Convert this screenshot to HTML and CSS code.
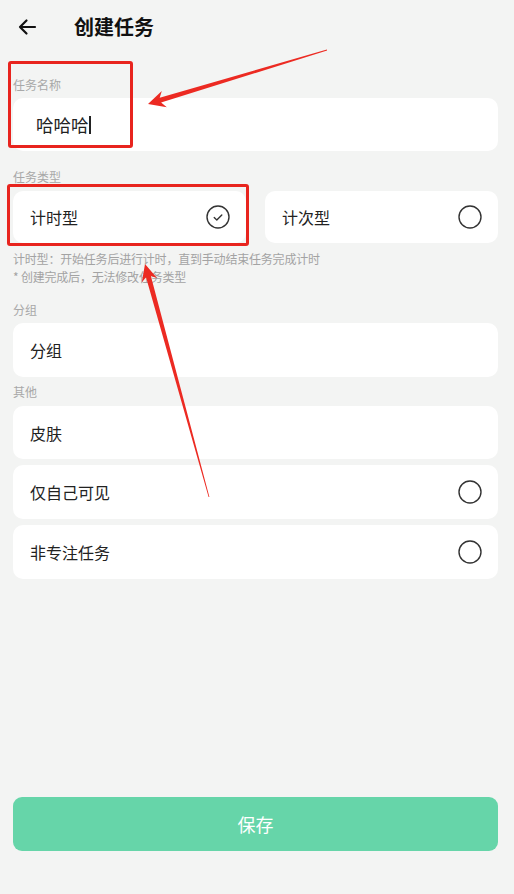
FILE: index.html
```html
<!DOCTYPE html>
<html lang="zh-CN">
<head>
<meta charset="utf-8">
<title>创建任务</title>
<link rel="stylesheet" href="styles.css">
</head>
<body>
<div class="page">
  <header class="header">
    <svg class="back" viewBox="0 0 20 20" width="20" height="20"><path d="M18 10H3M9.5 3.5L3 10l6.5 6.5" fill="none" stroke="#111" stroke-width="2.2" stroke-linecap="round" stroke-linejoin="round"/></svg>
    <h1 class="title">创建任务</h1>
  </header>

  <div class="label l1">任务名称</div>
  <div class="card input-card"><span class="input-text">哈哈哈</span><span class="cursor"></span></div>

  <div class="label l2">任务类型</div>
  <div class="type-row">
    <div class="card type-card">
      <span class="text">计时型</span>
      <svg class="radio" viewBox="0 0 24 24" width="24" height="24"><circle cx="12" cy="12" r="11" fill="none" stroke="#333" stroke-width="1.4"/><path d="M8.2 12.6l2.6 2.3 5-5" fill="none" stroke="#333" stroke-width="1.4" stroke-linecap="round" stroke-linejoin="round"/></svg>
    </div>
    <div class="card type-card">
      <span class="text">计次型</span>
      <svg class="radio" viewBox="0 0 24 24" width="24" height="24"><circle cx="12" cy="12" r="11" fill="none" stroke="#333" stroke-width="1.4"/></svg>
    </div>
  </div>
  <div class="hint">计时型：开始任务后进行计时，直到手动结束任务完成计时<br>* 创建完成后，无法修改任务类型</div>

  <div class="label l3">分组</div>
  <div class="card row h54"><span class="text">分组</span></div>

  <div class="label l4">其他</div>
  <div class="list">
    <div class="card row h53"><span class="text">皮肤</span></div>
    <div class="card row h54">
      <span class="text">仅自己可见</span>
      <svg class="radio" viewBox="0 0 24 24" width="24" height="24"><circle cx="12" cy="12" r="11" fill="none" stroke="#333" stroke-width="1.4"/></svg>
    </div>
    <div class="card row h54">
      <span class="text">非专注任务</span>
      <svg class="radio" viewBox="0 0 24 24" width="24" height="24"><circle cx="12" cy="12" r="11" fill="none" stroke="#333" stroke-width="1.4"/></svg>
    </div>
  </div>

  <button class="save">保存</button>
</div>

<div class="mark mark1"></div>
<div class="mark mark2"></div>
<svg class="arrows" viewBox="0 0 514 894" width="514" height="894">
  <polygon fill="#ec2a22" points="326.9,49.6 159.7,97.8 161.8,91 148,104 166.8,107.2 161.1,102.6 327.1,50.4"/>
  <polygon fill="#ec2a22" points="208.6,497.1 146,277.2 141.8,282.5 145,264 157.2,278.3 150.8,275.8 209.4,496.9"/>
</svg>
</body>
</html>
```

FILE: styles.css
```css
* { box-sizing: border-box; }
html, body { margin: 0; padding: 0; }
body {
  background: #f3f4f3;
  font-family: "Noto Sans CJK SC", "Noto Sans", sans-serif;
  color: #222;
  position: relative;
  width: 514px;
  min-height: 894px;
  overflow: hidden;
}
.page {
  display: flex;
  flex-direction: column;
  min-height: 894px;
  padding: 0 16px 43px 13px;
}
.header {
  height: 54px;
  display: flex;
  align-items: center;
  padding-left: 4px;
}
.back { flex: none; }
.title {
  margin: 0 0 0 37px;
  font-size: 20px;
  font-weight: 700;
  color: #111;
  line-height: 28px;
}
.label {
  font-size: 12px;
  line-height: 20px;
  color: #a8a8a8;
}
.l1 { margin-top: 21px; margin-bottom: 3px; }
.l2 { margin-top: 16px; margin-bottom: 4px; }
.l3 { margin-top: 14px; margin-bottom: 3px; }
.l4 { margin-top: 5px; margin-bottom: 4px; }
.card {
  background: #fff;
  border-radius: 10px;
}
.input-card {
  height: 53px;
  display: flex;
  align-items: center;
  padding-left: 23px;
}
.input-text {
  font-size: 17.5px;
  color: #222;
  line-height: 24px;
}
.cursor {
  display: inline-block;
  width: 2px;
  height: 18px;
  background: #222;
}
.type-row {
  display: grid;
  grid-template-columns: 1fr 1fr;
  column-gap: 19px;
}
.type-card {
  height: 52px;
  display: flex;
  align-items: center;
  justify-content: space-between;
  padding: 0 16px 0 17px;
}
.text {
  font-size: 16px;
  color: #222;
  line-height: 22px;
}
.radio { flex: none; }
.hint {
  margin-top: 7px;
  font-size: 12px;
  line-height: 18px;
  letter-spacing: -0.2px;
  color: #a3a3a3;
}
.row {
  display: flex;
  align-items: center;
  justify-content: space-between;
  padding: 0 16px 0 17px;
}
.h53 { height: 53px; }
.h54 { height: 54px; }
.list {
  display: flex;
  flex-direction: column;
  gap: 6px;
}
.save {
  margin-top: auto;
  height: 54px;
  width: 100%;
  border: 0;
  border-radius: 9px;
  background: #66d5a9;
  color: #fff;
  font-family: "Noto Sans CJK SC", "Noto Sans", sans-serif;
  font-size: 18px;
}
.mark {
  position: absolute;
  border: 3px solid #e8241e;
  border-radius: 3px;
}
.mark1 { left: 8px; top: 61px; width: 125px; height: 87px; }
.mark2 { left: 7px; top: 184px; width: 242px; height: 62px; }
.arrows {
  position: absolute;
  left: 0;
  top: 0;
  pointer-events: none;
}
```
